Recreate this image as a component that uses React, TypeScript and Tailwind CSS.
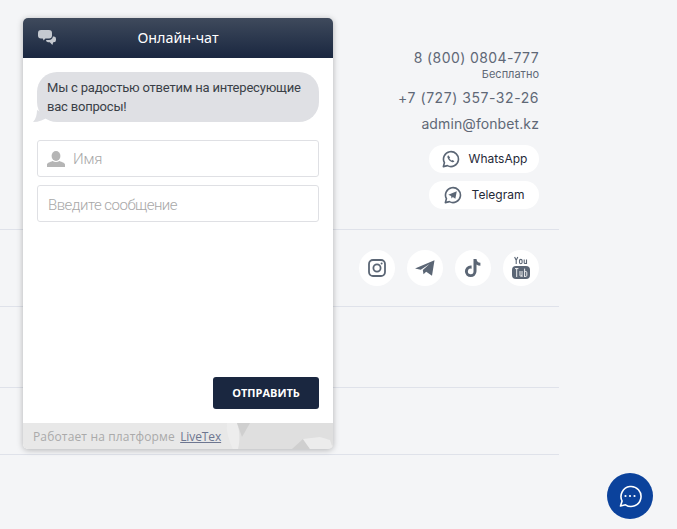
import React from "react";

const Pill = ({ icon, label, gap }: { icon: React.ReactNode; label: string; gap: string }) => (
  <div className={`flex h-[28px] w-[110px] items-center justify-center rounded-full bg-white text-[12px] text-[#1f2937] ${gap}`}>
    {icon}
    <span>{label}</span>
  </div>
);

const WhatsApp = () => (
  <svg width="18" height="18" viewBox="0 0 20 20" fill="none" stroke="#5b6675" strokeWidth="1.8">
    <path d="M1.5 18.5l1.2-4.4A8.3 8.3 0 1 1 6 17.4z" strokeLinejoin="round" />
    <path d="M7 5.8c-.8.5-1.2 1.3-.9 2.4.6 2.2 3 4.7 5.3 5.3 1 .3 1.9-.1 2.4-.9l-2.1-1.6-1 .8c-1-.5-2-1.5-2.5-2.6l.8-.9z" fill="#5b6675" stroke="none" />
  </svg>
);

const TelegramOutline = () => (
  <svg width="18" height="18" viewBox="0 0 20 20" fill="none" stroke="#5b6675" strokeWidth="1.8">
    <path d="M1.5 18.5l1.2-4.4A8.3 8.3 0 1 1 6 17.4z" strokeLinejoin="round" />
    <path d="M4.8 9.6l9.4-3.8-1.6 8.4-2.8-2-1.4 1.6-.5-2.8z" fill="#5b6675" stroke="none" />
  </svg>
);

const Social = ({ children }: { children: React.ReactNode }) => (
  <div className="flex h-9 w-9 items-center justify-center rounded-full bg-white">{children}</div>
);

export default function App() {
  return (
    <div className="relative h-[529px] w-[677px] overflow-hidden bg-[#f4f5f7] font-['Inter',sans-serif]">
      <div className="flex w-[559px] flex-col">
        <div className="flex h-[230px] flex-col items-end border-b border-[#dfe2ea] pr-5 pt-[48px]">
          <div className="text-[14px] leading-[20px] tracking-[0.4px] text-[#5f6876]">8 (800) 0804-777</div>
          <div className="-mt-px text-[11px] leading-[14px] text-[#5f6876]">Бесплатно</div>
          <div className="mt-[7px] text-[14px] leading-[20px] tracking-[0.55px] text-[#5f6876]">+7 (727) 357-32-26</div>
          <div className="mt-[6px] text-[14px] leading-[20px] tracking-[0.1px] text-[#5f6876]">admin@fonbet.kz</div>
          <div className="mt-[11px] flex flex-col gap-2">
            <Pill gap="gap-[9px] pl-[1px]" icon={<WhatsApp />} label="WhatsApp" />
            <Pill gap="gap-[10px]" icon={<TelegramOutline />} label="Telegram" />
          </div>
        </div>
        <div className="flex h-[77px] items-center justify-end gap-3 border-b border-[#dfe2ea] pr-5">
          <Social>
            <svg width="18" height="18" viewBox="0 0 18 18" fill="none" stroke="#5b6675" strokeWidth="1.8">
              <rect x="1" y="1" width="16" height="16" rx="4" />
              <circle cx="9" cy="9" r="3.6" />
              <circle cx="13.6" cy="4.4" r="1" fill="#5b6675" stroke="none" />
            </svg>
          </Social>
          <Social>
            <svg width="20" height="18" viewBox="0 0 20 18" fill="#5b6675">
              <path d="M0 9.6L19.5 1.2 17 16.8 11.2 12.8 8.5 15.2 7.8 11 14.5 5 5.8 10.8z" />
            </svg>
          </Social>
          <Social>
            <svg width="18" height="20" viewBox="0 0 18 20" fill="#5b6675">
              <path d="M9.5 1h3c.2 2.2 1.5 3.6 3.9 3.8v3c-1.5 0-2.8-.4-3.9-1.2v6.7a5.8 5.8 0 1 1-5.8-5.8l.9.1v3.1a2.8 2.8 0 1 0 1.9 2.6z" />
            </svg>
          </Social>
          <Social>
            <svg width="20" height="24" viewBox="0 0 20 24">
              <path d="M3.6 1l1.6 3.2L6.8 1M5.2 4.2V8M9.8 3.4c-1 0-1.3.5-1.3 1v2.2c0 .6.3 1.1 1.3 1.1s1.3-.5 1.3-1.1V4.4c0-.5-.3-1-1.3-1zM13.2 3.4v3.4c0 1 1.2 1 2.3 0M15.5 3.4V8" fill="none" stroke="#5b6675" strokeWidth="1.1" />
              <rect x="1" y="10" width="18" height="13" rx="4" fill="#5b6675" />
              <path d="M4 12.6h3.4M5.7 12.6V21M9 15v4.4c0 1 1 1 2 0M11 15v6M13.6 12.6V21M13.6 16c1.8-1.4 2.2 0 2.2 1v2c0 1-.6 2.2-2.2 1" fill="none" stroke="#fff" strokeWidth="0.9" />
            </svg>
          </Social>
        </div>
        <div className="h-[81px] border-b border-[#dfe2ea]" />
        <div className="h-[67px] border-b border-[#dfe2ea]" />
      </div>

      {/* chat window */}
      <div className="absolute left-[23px] top-[18px] flex h-[431px] w-[310px] flex-col overflow-hidden rounded-[5px] bg-white font-['Roboto',sans-serif] shadow-[0_1px_6px_rgba(0,0,0,0.28)]">
        <div className="relative flex h-10 flex-none items-center justify-center bg-gradient-to-b from-[#3f4a5c] to-[#1a2740] font-['Noto_Sans',sans-serif] text-[14.3px] text-white">
          <svg className="absolute left-[15px] top-[12px]" width="18" height="15" viewBox="0 0 18 15" fill="#c5c9d0">
            <path d="M3 0h8a3 3 0 0 1 3 3v2.5a3 3 0 0 1-3 3H7.4L5.6 10.6 4.8 8.5H3a3 3 0 0 1-3-3V3a3 3 0 0 1 3-3z" />
            <path d="M14.9 6.6h.9A2.2 2.2 0 0 1 18 8.8v1.2a2.2 2.2 0 0 1-2.2 2.2h-.6L14.4 15l-2.6-2.8H10A2.2 2.2 0 0 1 8 10h3c2.2 0 3.6-1.4 3.9-3.4z" />
          </svg>
          <span>Онлайн-чат</span>
        </div>
        <div className="flex min-h-0 flex-1 flex-col px-[14px] pt-[14px]">
          <div className="relative rounded-[20px] bg-[#dfe0e4] py-[6px] pl-[10px] pr-[10px] text-[13px] leading-[19px] tracking-[-0.2px] text-[#3a3f47]">
            Мы с радостью ответим на интересующие вас вопросы!
            <svg className="absolute -left-[4px] bottom-0" width="16" height="12" viewBox="0 0 16 12" fill="#dfe0e4">
              <path d="M4 0C4 4 3 9 0 12 6 12 11 10 16 6z" />
            </svg>
          </div>
          <div className="mt-[18px] flex h-[37px] items-center rounded-[3px] border border-[#dfe0e4] pl-[9px] text-[15px] font-light tracking-[-0.2px] text-[#a8a8a8]">
            <svg width="18" height="16" viewBox="0 0 18 16" fill="#b5b5b5">
              <ellipse cx="9" cy="5" rx="4.4" ry="5" />
              <path d="M0 16v-2.2c0-2 3-2.6 5.6-3.8 2 1.2 4.8 1.2 6.8 0 2.6 1.2 5.6 1.8 5.6 3.8V16z" />
            </svg>
            <span className="ml-[8px] pt-[2px]">Имя</span>
          </div>
          <div className="mt-2 flex h-[37px] items-center rounded-[3px] border border-[#dfe0e4] pl-[10px] pt-[3px] text-[15px] font-light tracking-[-0.5px] text-[#a8a8a8]">
            Введите сообщение
          </div>
          <div className="flex-1" />
          <div className="mb-[14px] flex justify-end">
            <button className="h-8 w-[106px] rounded-[3px] bg-[#1a2740] font-['Open_Sans',sans-serif] text-[11px] font-bold text-white">ОТПРАВИТЬ</button>
          </div>
        </div>
        <div className="relative h-[26px] flex-none overflow-hidden bg-[#e8e8e8] pl-[10px] font-['Open_Sans',sans-serif] text-[12px] leading-[27px] tracking-[0.15px] text-[#aaaaaa]">
          <svg className="absolute right-0 top-0" width="110" height="26" viewBox="0 0 110 26">
            <path d="M10 0H110V26H12z" fill="#dfdfdf" />
            <path d="M4 0H14C17 8 17 18 15 26H10C6 18 3 8 4 0z" fill="#ededed" />
            <path d="M14 0H27L19 14z" fill="#cfcfcf" />
            <path d="M69 26L80 16 87 26z" fill="#cfcfcf" />
            <path d="M80 16L97 14 107 17 110 26H87z" fill="#ececec" />
          </svg>
          <span className="relative">
            Работает на платформе <span className="ml-[2px] tracking-[-0.1px] text-[#6d7690] underline">LiveTex</span>
          </span>
        </div>
      </div>

      {/* chat launcher */}
      <div className="absolute left-[607px] top-[473px] flex h-[46px] w-[46px] items-center justify-center rounded-full bg-[#0b429c]">
        <svg width="24" height="24" viewBox="0 0 24 24" fill="none" stroke="#fff" strokeWidth="1.6">
          <path d="M2.5 22l1.6-5A10 10 0 1 1 7.5 20.8z" strokeLinejoin="round" />
          <circle cx="7.5" cy="12" r="1.1" fill="#fff" stroke="none" />
          <circle cx="12" cy="12" r="1.1" fill="#fff" stroke="none" />
          <circle cx="16.5" cy="12" r="1.1" fill="#fff" stroke="none" />
        </svg>
      </div>
    </div>
  );
}
